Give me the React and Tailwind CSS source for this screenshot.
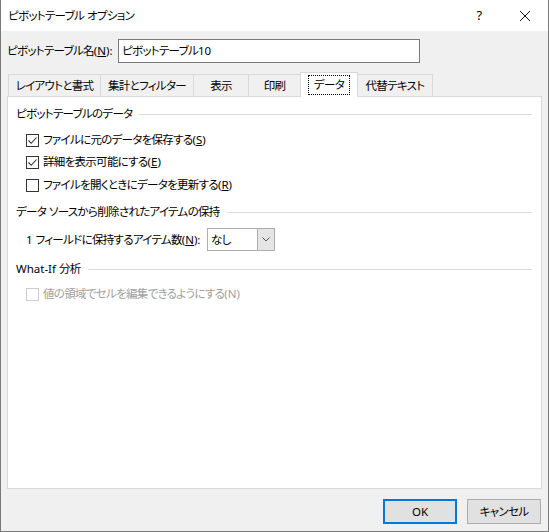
import React from "react";

const jp = "font-['Noto_Sans','Noto_Sans_CJK_JP',sans-serif] [font-feature-settings:'palt'] tracking-[-0.7px]";

// latin bits keep normal spacing
const L = ({ children }) => <span className="tracking-normal">{children}</span>;
const U = ({ children }) => <span className="underline">{children}</span>;

const Check = ({ checked, disabled }) => (
  <span
    className={`w-[13px] h-[13px] shrink-0 border bg-white flex items-center justify-center ${
      disabled ? "border-[#cccccc]" : "border-[#333333]"
    }`}
  >
    {checked && (
      <svg width="11" height="11" viewBox="0 0 11 11">
        <path d="M1.5 5.5 L4.2 8.3 L9.5 2.5" fill="none" stroke="#333" strokeWidth="1.1" />
      </svg>
    )}
  </span>
);

const Section = ({ title, className = "" }) => (
  <div className={`flex items-center h-[18px] pl-[8px] pr-[9px] gap-[7px] ${className}`}>
    <span className="whitespace-pre">{title}</span>
    <div className="flex-1 h-px bg-[#dcdcdc]" />
  </div>
);

const CheckRow = ({ checked, disabled, children, className = "" }) => (
  <div className={`flex items-center h-[22px] pl-[18px] gap-[4px] ${className}`}>
    <Check checked={checked} disabled={disabled} />
    <span className={disabled ? "text-[#a0a0a0]" : ""}>{children}</span>
  </div>
);

const tabs = [
  { label: "レイアウトと書式", w: "w-[93px]" },
  { label: "集計とフィルター", w: "w-[94px]" },
  { label: "表示", w: "w-[56px]" },
  { label: "印刷", w: "w-[53px]" },
  { label: "データ", w: "w-[58px]", active: true },
  { label: "代替テキスト", w: "w-[76px]" },
];

export default function App() {
  return (
    <div className={`w-[549px] h-[532px] bg-[#f0f0f0] border-x border-b border-[#7a7a7a] flex flex-col text-[11.5px] text-black ${jp}`}>
      {/* title bar */}
      <div className="h-[31px] bg-white flex items-center pl-[7px]">
        <span className="flex-1 whitespace-pre">ピボットテーブル<L> </L>オプション</span>
        <span className="w-[20px] text-center mr-[30px] text-[13px]">?</span>
        <svg width="12" height="12" viewBox="0 0 12 12" className="mr-[17px]">
          <path d="M1 1 L11 11 M11 1 L1 11" stroke="#111" strokeWidth="1" />
        </svg>
      </div>

      {/* name row */}
      <div className="flex items-center mt-[8px] h-[24px] pl-[6px]">
        <span className="w-[111px] whitespace-nowrap">
          ピボットテーブル名<L>(<U>N</U>):</L>
        </span>
        <div className="w-[302px] h-[24px] border border-[#7a7a7a] bg-white flex items-center pl-[3px]">
          ピボットテーブル<L>10</L>
        </div>
      </div>

      {/* tabs */}
      <div className="flex items-end h-[25px] mt-[9px] pl-[7px] relative z-10 -mb-px">
        {tabs.map((t, i) =>
          t.active ? (
            <div
              key={t.label}
              className={`${t.w} h-[25px] -ml-px bg-white border-x border-t border-[#d9d9d9] flex items-center justify-center`}
            >
              <span className="border border-dotted border-black px-[5px] h-[20px] flex items-center">
                {t.label}
              </span>
            </div>
          ) : (
            <div
              key={t.label}
              className={`${t.w} h-[22px] mb-px ${i > 0 ? "-ml-px" : ""} bg-[#f0f0f0] border-x border-t border-[#d9d9d9] flex items-center justify-center whitespace-nowrap`}
            >
              {t.label}
            </div>
          )
        )}
      </div>

      {/* panel */}
      <div className="ml-[6px] w-[535px] h-[393px] bg-white border border-[#d9d9d9] pt-[8px]">
        <Section title="ピボットテーブルのデータ" />
        <CheckRow checked className="mt-[6px]">
          ファイルに元のデータを保存する<L>(<U>S</U>)</L>
        </CheckRow>
        <CheckRow checked>
          詳細を表示可能にする<L>(<U>E</U>)</L>
        </CheckRow>
        <CheckRow className="mt-[1px]">
          ファイルを開くときにデータを更新する<L>(<U>R</U>)</L>
        </CheckRow>

        <Section title={<>データ<L> </L>ソースから削除されたアイテムの保持</>} className="mt-[7px]" />
        <div className="flex items-center h-[23px] mt-[7px] pl-[18px]">
          <span className="w-[181px] whitespace-pre">
            <L>1 </L>フィールドに保持するアイテム数<L>(<U>N</U>):</L>
          </span>
          <div className="w-[68px] h-[23px] border border-[#adadad] bg-white flex">
            <span className="flex-1 flex items-center pl-[3px]">なし</span>
            <span className="w-[17px] bg-[#e5e5e5] border-l border-[#adadad] flex items-center justify-center">
              <svg width="8" height="5" viewBox="0 0 8 5">
                <path d="M0.5 0.5 L4 4 L7.5 0.5" fill="none" stroke="#555" strokeWidth="1" />
              </svg>
            </span>
          </div>
        </div>

        <Section title={<><L>What-If </L>分析</>} className="mt-[9px]" />
        <CheckRow disabled className="mt-[5px]">
          値の領域でセルを編集できるようにする<L>(N)</L>
        </CheckRow>
      </div>

      {/* buttons */}
      <div className="flex justify-end gap-[10px] mt-[10px] pr-[7px]">
        <button className="w-[74px] h-[25px] border-2 border-[#0078d7] bg-[#e1e1e1] flex items-center justify-center tracking-normal">
          OK
        </button>
        <button className="w-[74px] h-[25px] border border-[#adadad] bg-[#e1e1e1] flex items-center justify-center">
          キャンセル
        </button>
      </div>
    </div>
  );
}
